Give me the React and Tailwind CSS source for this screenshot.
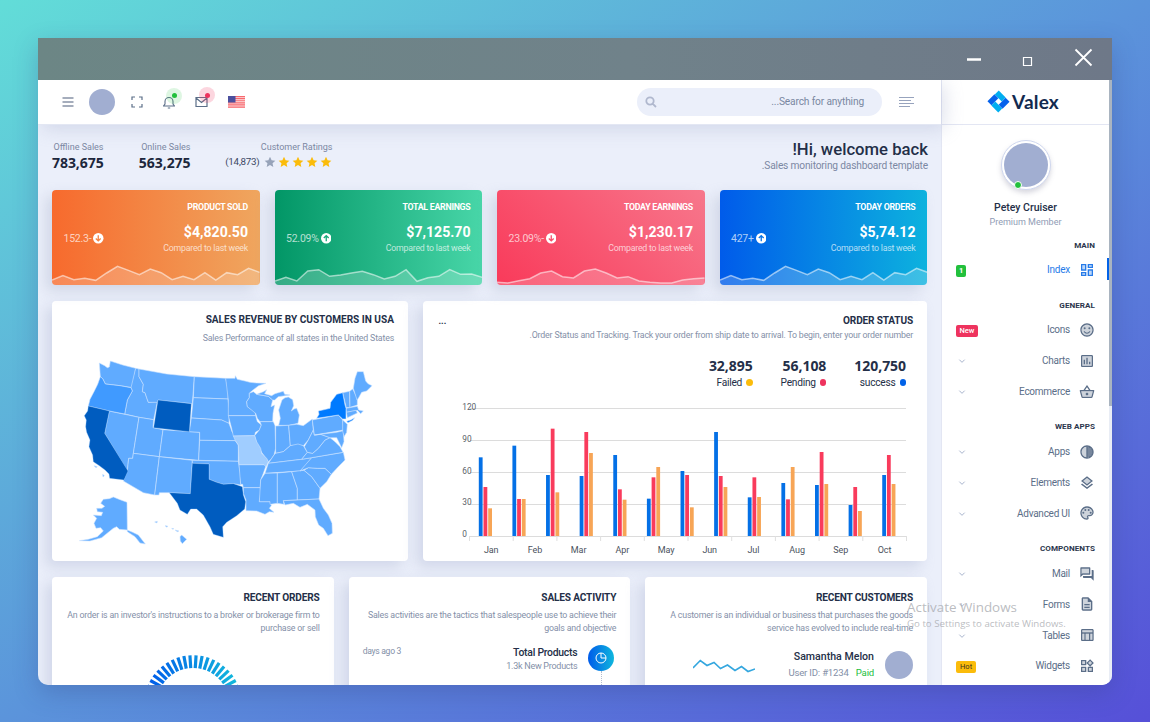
import React from "react";

const WAVE_A = [300, 287, 299, 295, 301, 279, 259, 271, 284, 267, 278, 299, 289, 299, 278, 300, 278, 284, 265, 277];
const WAVE_B = [303, 292, 303, 273, 269, 289, 285, 279, 274, 284, 297, 289, 269, 304, 293, 289, 269, 283, 282, 292];
const WAVE_C = [307, 309, 302, 296, 279, 273, 290, 294, 273, 267, 279, 294, 290, 303, 307, 309, 309, 300, 296, 294];

const STATS = [
  { title: "PRODUCT SOLD", value: "$4,820.50", delta: "152.3-", up: false, wave: WAVE_A, bg: "bg-[linear-gradient(to_right,#f76a2d,#efa65f)]", fg: "#f58345" },
  { title: "TOTAL EARNINGS", value: "$7,125.70", delta: "52.09%", up: true, wave: WAVE_B, bg: "bg-[linear-gradient(to_right,#029666,#48d6a8)]", fg: "#18a97b" },
  { title: "TODAY EARNINGS", value: "$1,230.17", delta: "23.09%-", up: false, wave: WAVE_C, bg: "bg-[linear-gradient(45deg,#f93a5a,#f7778c)]", fg: "#f94f6b" },
  { title: "TODAY ORDERS", value: "$5,74.12", delta: "427+", up: true, wave: WAVE_A, bg: "bg-[linear-gradient(to_right,#005bea,#0db2de)]", fg: "#0572e8" },
];

function StatCard({ s }) {
  const pts = s.wave.map((y, i) => `${(i * 624) / 19},${y - 255}`).join(" ");
  return (
    <div className={`relative flex h-[95px] flex-col justify-between overflow-hidden rounded-[4px] text-white shadow-[-6px_6px_14px_rgba(150,160,190,0.3)] ${s.bg}`}>
      <div className="flex flex-col px-[11.5px] pt-[10px]">
        <div className="text-right text-[8.8px] font-bold leading-[14px] tracking-[-0.27px]">{s.title}</div>
        <div className="mt-[8px] flex items-start justify-between">
          <div className="flex items-center gap-[2px] pt-[9.5px] text-[10.5px] leading-[14px] tracking-[-0.22px]">
            <span className="text-white/70">{s.delta}</span>
            <svg viewBox="0 0 12 12" className="size-[10.5px]">
              <circle cx="6" cy="6" r="6" fill="#fff" />
              <path d={s.up ? "M6 9.5V3M3.2 5.8 6 3l2.8 2.8" : "M6 2.5V9M3.2 6.2 6 9l2.8-2.8"} fill="none" stroke={s.fg} strokeWidth="1.5" />
            </svg>
          </div>
          <div className="text-right">
            <div className="text-[14.1px] font-bold leading-[20px]">{s.value}</div>
            <div className="text-[8.8px] leading-[13px] tracking-[-0.24px] text-white/70">Compared to last week</div>
          </div>
        </div>
      </div>
      <svg viewBox="0 0 624 60" preserveAspectRatio="none" className="h-5 w-full shrink-0">
        <polygon points={`0,60 ${pts} 624,60`} fill="#fff" fillOpacity=".2" />
        <polyline points={pts} fill="none" stroke="#fff" strokeOpacity=".55" strokeWidth="4.5" />
      </svg>
    </div>
  );
}

const BASE_STATES = [
  "M88,54 104,62 112,68 118,66 121,48 158,60 197,70 187,128 150,122 106,117 98,101 91,95Z",
  "M197,70 207,72 207,95 220,118 217,140 225,143 230,158 235,172 262,170 251,224 207,217 164,207 172,165 187,138 183,128Z",
  "M207,72 290,87 373,95 367,176 264,165 262,172 235,172 230,158 225,143 217,140 220,118 207,95Z",
  "M118,198 207,217 190,325 188,340 176,340 172,378 104,265Z",
  "M207,217 251,224 249,248 279,254 268,335 190,325Z",
  "M279,254 389,262 386,346 268,335Z",
  "M190,325 268,335 254,450 220,443 160,408 172,378 176,340 188,340Z",
  "M268,335 367,346 361,446 298,443 268,443 267,450 254,450Z",
  "M373,95 467,100 474,130 474,162 370,158Z",
  "M370,158 474,162 477,190 477,235 465,230 455,225 364,219Z",
  "M364,219 455,225 477,235 486,260 504,287 389,286 389,262 358,260Z",
  "M389,286 496,287 505,300 505,349 386,346Z",
  "M367,346 505,349 511,386 512,420 490,416 460,418 440,412 417,403 417,357 367,355Z",
  "M467,100 495,100 496,92 502,103 525,108 540,112 560,114 588,115 566,122 545,138 538,145 538,158 530,170 532,185 555,200 557,212 475,212 475,165Z",
  "M475,212 557,212 562,230 574,240 568,255 556,262 554,272 490,273 485,250Z",
  "M507,359 589,359 580,385 572,405 571,428 520,428 518,418 512,418Z",
  "M520,428 571,428 572,445 568,470 600,470 604,482 598,490 612,502 598,500 585,508 560,498 528,497 528,465 520,445Z",
  "M538,145 550,140 560,148 595,154 608,165 603,185 614,180 609,205 608,230 570,230 562,220 557,205 532,185 530,170 538,158Z",
  "M570,230 610,230 615,242 617,310 612,330 604,342 595,350 575,322 560,295 554,272 568,255 574,240Z",
  "M560,148 580,140 590,134 584,146 605,152 615,146 640,139 644,148 660,150 625,155 614,165 608,165 595,154Z",
  "M636,165 645,158 655,156 668,164 671,182 664,198 672,192 680,190 688,210 684,235 656,241 626,241 631,220 626,195Z",
  "M617,243 656,241 661,302 640,320 617,325Z",
  "M656,241 680,238 700,242 727,222 730,255 715,285 700,302 684,300 661,302Z",
  "M595,355 612,330 617,325 640,320 661,302 684,297 700,302 712,322 695,343Z",
  "M595,355 695,343 725,338 710,358 690,378 585,385Z",
  "M585,385 622,384 622,475 600,478 600,470 568,470 572,405Z",
  "M622,384 665,380 682,430 682,465 640,467 642,478 622,475Z",
  "M665,380 702,376 725,395 750,430 747,462 682,465 682,430Z",
  "M640,467 747,462 760,490 775,510 786,535 787,565 774,572 760,550 746,540 736,515 735,495 712,478 690,487 670,475 645,480Z",
  "M702,376 715,368 742,370 765,370 784,388 770,410 750,430 725,395Z",
  "M690,378 725,338 820,322 825,345 805,365 784,388 765,370 742,370 715,368Z",
  "M695,343 712,322 728,325 745,310 765,285 780,278 795,290 810,305 819,322 725,338Z",
  "M712,322 703,305 715,285 730,255 733,270 752,268 780,278 765,285 745,310 728,325Z",
  "M727,225 805,210 818,225 820,255 733,270Z",
  "M733,270 800,262 820,257 822,290 815,308 800,278 780,278 752,268Z",
  "M818,225 832,238 830,262 822,275 818,258Z",
  "M818,143 839,139 839,160 840,187 829,188Z",
  "M839,139 848,132 862,160 862,180 840,187Z",
  "M828,190 862,184 866,195 880,198 872,206 862,196 829,202Z",
  "M829,202 858,196 862,204 832,218Z",
  "M850,130 855,100 862,80 880,80 887,108 894,116 906,122 890,138 875,142 866,158 861,165Z",
  "M171,472 150,464 130,456 118,461 100,463 92,475 104,484 96,490 80,490 82,500 98,502 94,512 70,510 80,520 72,535 78,550 92,548 100,558 82,575 55,583 28,587 60,588 95,578 115,562 130,550 140,545 148,553 172,555 188,562 205,570 226,597 210,594 195,575 172,560Z",
  "M330,575 335,570 350,583 337,596 331,588Z",
  "M254,531 262,529 261,534Z",
  "M285,542 293,543 291,547Z",
  "M305,550 312,551 308,553Z",
  "M315,555 327,558 322,560Z",
  "M72,362 82,365 78,368Z",
  "M98,388 103,392 99,396Z",
];

function UsaMap() {
  return (
    <svg viewBox="0 0 960 630" className="h-[210px] w-[320px]" strokeLinejoin="round">
      <g fill="#60abff" stroke="#cbe2ff" strokeWidth="1.700">
        {BASE_STATES.map((d) => <path key={d} d={d} />)}
        <path d="M91,95 98,101 106,117 150,122 183,128 187,138 172,165 164,207 118,198 55,183 60,163 72,140 83,118Z" fill="#409aff" />
        <path d="M490,273 554,272 560,290 572,310 575,325 590,340 595,350 588,366 582,359 507,359 505,300 496,287Z" fill="#a0cdff" />
        <path d="M740,220 747,208 745,198 780,190 782,172 800,148 818,143 825,180 828,190 828,222 818,222 805,210Z" fill="#007aff" />
        <path d="M830,229 842,225 854,218 848,226 834,233Z" fill="#007aff" />
      </g>
      <g fill="#005cbf" stroke="#9ccaff" strokeWidth="1">
        <path d="M55,183 118,198 104,265 174,378 162,405 119,400 117,387 105,375 88,362 70,350 68,330 57,305 60,285 50,262 47,245 49,225 43,212 53,198Z" />
        <path d="M264,165 364,176 358,260 251,248Z" />
        <path d="M367,355 417,357 417,403 440,412 460,418 490,416 517,425 520,450 527,470 524,492 500,512 470,532 458,545 460,577 430,568 420,545 400,510 380,492 362,492 352,508 330,495 322,475 298,443 361,446Z" />
      </g>
    </svg>
  );
}

const SERIES = [
  { color: "#0470e6", tops: [472, 437, 525, 528, 465, 596, 513, 396, 592, 549, 555, 615, 525] },
  { color: "#f93b5c", tops: [561, 597, 386, 396, 568, 532, 525, 528, 532, 598, 456, 561, 465] },
  { color: "#f7a556", tops: [625, 597, 577, 459, 599, 501, 622, 561, 591, 501, 552, 633, 552] },
];
const MONTHS = ["Jan", "Feb", "Mar", "Apr", "May", "Jun", "Jul", "Aug", "Sep", "Oct"];

function OrderChart() {
  return (
    <svg viewBox="425 398 500 162" className="h-[162px] w-[500px] font-[Roboto,sans-serif]">
      {[120, 90, 60, 30, 0].map((v, i) => (
        <g key={v}>
          <rect x={v ? 470 : 469} y={408 + i * 32} width={v ? 436 : 437} height="1" fill="#dcdcdc" />
          <text x="462.300" y={409.9 + i * 31.8} fontSize="8.300" fill="#5a5f68">{v}</text>
        </g>
      ))}
      {Array.from({ length: 11 }, (_, i) => (
        <rect key={i} x={469 + i * 43.7} y="536" width="1" height="5" fill="#dfdfdf" />
      ))}
      {SERIES.map((s, k) =>
        s.tops.map((t, i) => (
          <rect key={`${k}-${i}`} x={478.8 + i * 33.62 + k * 4.7} y={300 + t / 3} width="3.800" height={236 - t / 3} fill={s.color} />
        ))
      )}
      {MONTHS.map((m, i) => (
        <text key={m} x={491.2 + i * 43.7} y="553.300" textAnchor="middle" fontSize="9" letterSpacing="-0.100" fill="#4c535e">{m}</text>
      ))}
    </svg>
  );
}

const ICONS = {
  index: ["M5 5h4v6H5zm10 8h4v6h-4zM5 17h4v2H5zM15 5h4v2h-4z", "M3 13h8V3H3v10zm2-8h4v6H5V5zm8 16h8V11h-8v10zm2-8h4v6h-4v-6zM13 3v6h8V3h-8zm6 4h-4V5h4v2zM3 21h8v-6H3v6zm2-4h4v2H5v-2z"],
  smile: ["M12 4a8 8 0 100 16 8 8 0 000-16z", "M12 2C6.47 2 2 6.48 2 12s4.47 10 10 10 10-4.48 10-10S17.52 2 12 2zm0 18c-4.42 0-8-3.58-8-8s3.58-8 8-8 8 3.58 8 8-3.58 8-8 8zM15.500 8a1.500 1.500 0 100 3 1.500 1.500 0 000-3zM8.500 8a1.500 1.500 0 100 3 1.500 1.500 0 000-3zM12 16c-1.480 0-2.750-.81-3.450-2H6.880c.8 2.050 2.790 3.500 5.120 3.500s4.320-1.450 5.120-3.500h-1.670c-.69 1.190-1.970 2-3.450 2z"],
  chart: ["M5 5h14v14H5z", "M19 3H5c-1.100 0-2 .9-2 2v14c0 1.100.9 2 2 2h14c1.100 0 2-.9 2-2V5c0-1.100-.9-2-2-2zm0 16H5V5h14v14zM7 10h2v7H7zm4-3h2v10h-2zm4 6h2v4h-2z"],
  basket: ["M3.310 11l2.200 8.010L18.500 19l2.200-8H3.310z", "M22 9h-4.790l-4.380-6.560c-.19-.28-.51-.42-.83-.42s-.64.14-.83.43L6.790 9H2c-.55 0-1 .45-1 1 0 .09.01.18.04.27l2.540 9.270c.23.84 1 1.460 1.920 1.460h13c.92 0 1.690-.62 1.930-1.460l2.540-9.270L23 10c0-.55-.45-1-1-1zM12 4.800L14.800 9H9.200L12 4.800zM18.500 19l-12.990.01L3.310 11H20.700l-2.200 8zM12 13c-1.100 0-2 .9-2 2s.9 2 2 2 2-.9 2-2-.9-2-2-2z"],
  tone: ["M12 4a8 8 0 100 16z M13 4v16a8 8 0 000-16z", "M12 2C6.480 2 2 6.480 2 12s4.480 10 10 10 10-4.480 10-10S17.520 2 12 2zm-1 17.930c-3.940-.49-7-3.850-7-7.930s3.050-7.440 7-7.930v15.860zm2-15.860c1.030.13 2 .45 2.870.93H13v-.93zM13 7h5.240c.25.31.48.65.68 1H13V7zm0 3h6.740c.08.33.15.66.19 1H13v-1zm0 9.930V19h2.870c-.87.48-1.840.8-2.870.93zM18.240 17H13v-1h5.920c-.2.35-.43.69-.68 1zm1.500-3H13v-1h6.930c-.04.34-.11.67-.19 1z"],
  layers: ["M6.260 9L12 13.470 17.740 9 12 4.530z", "M12 18.540l-7.370-5.730L3 14.070l9 7 9-7-1.630-1.270zM12 16l7.360-5.730L21 9l-9-7-9 7 1.630 1.270L12 16zm0-11.470L17.740 9 12 13.470 6.260 9 12 4.530z"],
  palette: ["M12 4c-4.410 0-8 3.590-8 8s3.590 8 8 8c.28 0 .5-.22.5-.5 0-.16-.08-.28-.14-.35-.41-.46-.63-1.050-.63-1.650 0-1.380 1.120-2.500 2.500-2.500H16c2.210 0 4-1.790 4-4 0-3.860-3.590-7-8-7z", "M12 22C6.490 22 2 17.510 2 12S6.490 2 12 2s10 4.040 10 9c0 3.310-2.690 6-6 6h-1.770c-.28 0-.5.22-.5.5 0 .12.05.23.13.33.41.47.64 1.060.64 1.670 0 1.380-1.120 2.500-2.500 2.500zm0-18c-4.410 0-8 3.590-8 8s3.590 8 8 8c.28 0 .5-.22.5-.5 0-.16-.08-.28-.14-.35-.41-.46-.63-1.050-.63-1.650 0-1.380 1.120-2.500 2.500-2.500H16c2.210 0 4-1.790 4-4 0-3.860-3.590-7-8-7zM6.500 10a1.500 1.500 0 100 3 1.500 1.500 0 000-3zM9.500 6a1.500 1.500 0 100 3 1.500 1.500 0 000-3zM14.500 6a1.500 1.500 0 100 3 1.500 1.500 0 000-3zM17.500 10a1.500 1.500 0 100 3 1.500 1.500 0 000-3z"],
  forum: ["M15 11V4H4v8.170L5.170 11H15z", "M15 4v7H5.170L4 12.170V4h11m1-2H3c-.55 0-1 .45-1 1v14l4-4h10c.55 0 1-.45 1-1V3c0-.55-.45-1-1-1zm5 4h-2v9H6v2c0 .55.45 1 1 1h11l4 4V7c0-.55-.45-1-1-1z"],
  doc: ["M13 4H6v16h12V9h-5V4z", "M8 16h8v2H8zm0-4h8v2H8zm6-10H6c-1.100 0-2 .9-2 2v16c0 1.100.89 2 1.990 2H18c1.100 0 2-.9 2-2V8l-6-6zm4 18H6V4h7v5h5v11z"],
  table: ["M5 5h15v3H5zM17 10h3v9h-3zM5 10h3v9H5zM10 10h5v9h-5z", "M20 3H5c-1.100 0-2 .9-2 2v14c0 1.100.9 2 2 2h15c1.100 0 2-.9 2-2V5c0-1.100-.9-2-2-2zm0 2v3H5V5h15zm-5 14h-5v-9h5v9zM5 10h3v9H5v-9zm12 9v-9h3v9h-3z"],
  widgets: ["M5 5h4v4H5zm10 10h4v4h-4zM5 15h4v4H5zM16.660 4.520l-2.830 2.820 2.830 2.830 2.830-2.830z", "M16.660 4.520l2.830 2.830-2.830 2.830-2.830-2.830 2.830-2.830M9 5v4H5V5h4m10 10v4h-4v-4h4M9 15v4H5v-4h4m7.660-13.310L11 7.340 16.660 13l5.660-5.660-5.660-5.650zM11 3H3v8h8V3zm10 10h-8v8h8v-8zm-10 0H3v8h8v-8z"],
};

function TwoTone({ name }) {
  const [soft, line] = ICONS[name];
  return (
    <svg viewBox="0 0 24 24" fill="currentColor" className="size-4 shrink-0">
      <path d={soft} opacity=".3" />
      <path d={line} />
    </svg>
  );
}

const MENU = [
  { head: "MAIN", items: [{ label: "Index", icon: "index", badge: "1", badgeCls: "bg-[#22c03c] text-white px-[3px] font-bold", active: true }] },
  { head: "GENERAL", items: [{ label: "Icons", icon: "smile", badge: "New", badgeCls: "bg-[#ee335e] text-white px-[3.5px] font-medium" }, { label: "Charts", icon: "chart" }, { label: "Ecommerce", icon: "basket" }] },
  { head: "WEB APPS", items: [{ label: "Apps", icon: "tone" }, { label: "Elements", icon: "layers" }, { label: "Advanced UI", icon: "palette" }] },
  { head: "COMPONENTS", items: [{ label: "Mail", icon: "forum" }, { label: "Forms", icon: "doc" }, { label: "Tables", icon: "table" }, { label: "Widgets", icon: "widgets", badge: "Hot", badgeCls: "bg-[#fbbc0b] text-[#3b3420] px-[4px]" }] },
];

function Sidebar() {
  return (
    <aside className="flex w-[168px] shrink-0 flex-col border-l border-[#e3e6f3] bg-white">
      <div className="flex h-[45px] shrink-0 items-center justify-center gap-[2px] border-b border-[#e3e6f3] pb-[1px] pr-[5px]">
        <svg viewBox="0 0 66 66" className="size-[23px]" strokeWidth="16" strokeLinejoin="round">
          <path d="M28 7 48 27" stroke="#00aef0" />
          <path d="M38 59 18 39" stroke="#00aef0" />
          <path d="M59 28 39 48" stroke="#0562ec" />
          <path d="M7 38 27 18" stroke="#0562ec" />
        </svg>
        <span className="font-['Lato',sans-serif] text-[19px] font-bold leading-none tracking-[0.15px] text-[#122a4f]">Valex</span>
      </div>
      <div className="flex h-[100px] shrink-0 flex-col items-center pt-[15px]">
        <div className="relative flex size-[50px] shrink-0 items-center justify-center rounded-full border border-[#cfd7ee] bg-white shadow-[0_3px_5px_rgba(100,100,130,0.25)]">
          <div className="size-[44px] rounded-full bg-[#a1aed1]" />
          <span className="absolute bottom-[0px] left-[12.5px] size-[8px] rounded-full border border-white bg-[#22c03c]" />
        </div>
        <div className="mt-[9.500px] text-[10.500px] font-medium leading-[16px] text-[#242f48]">Petey Cruiser</div>
        <div className="text-[9px] leading-[13px] text-[#8f9cb5]">Premium Member</div>
      </div>
      {MENU.map((g) => (
        <div key={g.head} className="flex flex-col">
          <div className="h-[29.400px] pr-[14px] pt-[12.500px] text-right text-[8.100px] font-bold leading-[14px] tracking-[0.050px] text-[#2c364c]">{g.head}</div>
          {g.items.map((it) => (
            <div key={it.label} className={`relative flex h-[30.800px] items-center justify-end gap-[9px] pr-[14px] text-[10px] tracking-[-0.250px] ${it.active ? "text-[#267be9]" : "text-[#5b6e88]"}`}>
              <div className="flex flex-1 items-center pl-[14px] pt-[3px] tracking-normal">
                {it.badge ? (
                  <span className={`rounded-[2px] text-[7.500px] leading-[12px] ${it.badgeCls}`}>{it.badge}</span>
                ) : (
                  <svg viewBox="0 0 12 12" className="mb-[2px] ml-[2px] size-[8px]"><path d="M2 4l4 4 4-4" fill="none" stroke="#a8b4cd" strokeWidth="1.500" /></svg>
                )}
              </div>
              <span>{it.label}</span>
              <TwoTone name={it.icon} />
              {it.active && <span className="absolute right-0 top-[4px] h-[22px] w-[2px] bg-[#0162e8]" />}
            </div>
          ))}
        </div>
      ))}
    </aside>
  );
}

function Header() {
  return (
    <header className="relative z-10 flex h-[45px] shrink-0 items-center justify-between border-b border-[#e3e7f3] bg-white pl-[23.500px] pr-[27px] text-[#5b6e88] shadow-[4px_4px_18px_rgba(150,160,195,0.3)]">
      <div className="flex items-center">
        <svg viewBox="0 0 12 12" className="size-3"><path d="M.5 2h11M.5 6h11M.5 10h11" stroke="#4d5d7a" strokeWidth="1.200" /></svg>
        <div className="ml-[15.500px] size-[26px] rounded-full bg-[#a1aed1]" />
        <svg viewBox="0 0 12 12" className="ml-[15.500px] size-3"><path d="M4 1H1v3M8 1h3v3M4 11H1V8M8 11h3V8" fill="none" stroke="currentColor" strokeWidth="1.200" /></svg>
        <div className="relative ml-5 flex">
          <svg viewBox="0 0 12 13" className="h-[13px] w-3"><path d="M.5 10h11L10 8V5.500a4 4 0 00-8 0V8zM4.800 12h2.400" fill="none" stroke="currentColor" strokeWidth="1.100" /></svg>
          <span className="absolute left-[3.500px] top-[-8px] flex size-4 items-center justify-center rounded-full bg-[#22c03c]/15"><i className="size-[5px] rounded-full bg-[#22c03c]" /></span>
        </div>
        <div className="relative ml-[20px] flex">
          <svg viewBox="0 0 13 12" className="h-3 w-[13px]"><path d="M1 1.500h11v9H1zM1 2l5.500 4.500L12 2" fill="none" stroke="currentColor" strokeWidth="1.200" /></svg>
          <span className="absolute left-[4.500px] top-[-9px] flex size-4 items-center justify-center rounded-full bg-[#ee335e]/20"><i className="size-[5px] rounded-full bg-[#ee335e]" /></span>
        </div>
        <svg viewBox="0 0 17 12" className="ml-5 h-3 w-[17px]">
          <rect width="17" height="12" fill="#fde3e4" />
          <path d="M0 .5h17M0 2.400h17M0 4.300h17M0 6.200h17M0 8.100h17M0 10h17M0 11.700h17" stroke="#f8696e" strokeWidth="1.100" />
          <rect width="7.500" height="6.500" fill="#4b4f9e" />
        </svg>
      </div>
      <div className="flex items-center gap-[17px]">
        <div className="flex h-7 w-[245px] items-center justify-between rounded-full bg-[#ebeffa] pl-[8px] pr-[18px]">
          <svg viewBox="0 0 12 12" className="size-3"><path d="M7.800 7.800 11 11M5 8.700a3.700 3.700 0 110-7.400 3.700 3.700 0 010 7.400z" fill="none" stroke="#b0b8ce" strokeWidth="1.800" /></svg>
          <span className="text-[10.200px] tracking-[-0.150px] text-[#7987a1]">...Search for anything</span>
        </div>
        <svg viewBox="0 0 15 12" className="h-3 w-[15px]"><path d="M0 1.500h15M0 4.500h12M0 7.500h15M0 10.500h11" stroke="#97a3bd" strokeWidth="1.200" /></svg>
      </div>
    </header>
  );
}

const STAR = "M12 1.500l3.200 6.900 7.500.9-5.600 5.100 1.500 7.400L12 18.100l-6.600 3.700 1.500-7.400L1.300 9.300l7.500-.9z";

function Welcome() {
  return (
    <div className="flex h-[65px] items-start justify-between pr-[13px] pt-[14px]">
      <div className="flex text-right">
        <div className="w-[51.500px]">
          <div className="text-[9px] leading-[17px] text-[#7b88a3]">Offline Sales</div>
          <div className="font-['Open_Sans',sans-serif] text-[14px] font-bold leading-[13px] tracking-[-0.050px] text-[#1c273c]">783,675</div>
        </div>
        <div className="w-[87px]">
          <div className="text-[9px] leading-[17px] text-[#7b88a3]">Online Sales</div>
          <div className="font-['Open_Sans',sans-serif] text-[14px] font-bold leading-[13px] tracking-[-0.050px] text-[#1c273c]">563,275</div>
        </div>
        <div className="w-[142px]">
          <div className="text-[9px] leading-[17px] text-[#7b88a3]">Customer Ratings</div>
          <div className="flex items-center justify-end gap-[2px] pr-[0.500px]">
            <span className="mr-[2.500px] text-[9.800px] leading-[12px] tracking-[-0.250px] text-[#3b4863]">(14,873)</span>
            {["#97a3b9", "#fbbc0b", "#fbbc0b", "#fbbc0b", "#fbbc0b"].map((c, i) => (
              <svg key={i} viewBox="0 0 24 24" className="size-[12px]"><path d={STAR} fill={c} /></svg>
            ))}
          </div>
        </div>
      </div>
      <div className="text-right">
        <div className="text-[16.700px] font-medium leading-[21px] text-[#242f48]">!Hi, welcome back</div>
        <div className="text-[10.200px] leading-[12px] tracking-[-0.180px] text-[#7b88a3]">.Sales monitoring dashboard template</div>
      </div>
    </div>
  );
}

const PANEL = "rounded-[4px] bg-white shadow-[-6px_6px_14px_rgba(150,160,195,0.3)]";

function Panel({ title, sub, className = "", heading = "pt-[13.500px] text-[10.100px] tracking-[-0.160px]", children }) {
  return (
    <section className={`flex flex-col ${PANEL} ${className}`}>
      <h3 className={`px-[14px] text-right font-bold leading-[14px] text-[#242f48] ${heading}`}>{title}</h3>
      <p className="mt-[4.500px] whitespace-pre px-[14px] text-right text-[8.800px] leading-[12.500px] tracking-[-0.180px] text-[#8490a8]">{sub}</p>
      {children}
    </section>
  );
}

const TOTALS = [
  { value: "32,895", label: "Failed", dot: "bg-[#fbbc0b]" },
  { value: "56,108", label: "Pending", dot: "bg-[#ee335e]" },
  { value: "120,750", label: "success", dot: "bg-[#0162e8]" },
];

function Donut() {
  return (
    <svg viewBox="0 0 100 100" className="mx-auto mt-[20px] size-[100px] shrink-0">
      <defs>
        <linearGradient id="ring" gradientUnits="userSpaceOnUse" x1="5" y1="0" x2="95" y2="0">
          <stop offset="0" stopColor="#005bea" /><stop offset="1" stopColor="#13bbdc" />
        </linearGradient>
      </defs>
      <g stroke="url(#ring)" strokeWidth="3.200">
        {Array.from({ length: 50 }, (_, i) => {
          const a = ((i + 0.5) * 7.2 * Math.PI) / 180;
          const c = Math.cos(a);
          const s = Math.sin(a);
          return <path key={i} d={`M${50 + 36 * s} ${50 - 36 * c}L${50 + 48.8 * s} ${50 - 48.8 * c}`} />;
        })}
      </g>
    </svg>
  );
}

export default function App() {
  return (
    <div className="relative h-[722px] w-[1150px] overflow-hidden bg-[linear-gradient(to_bottom_right,#62ddd8,#5b94db_50%,#5650d8)] font-['Roboto',sans-serif]">
      <div className="px-[38px] pt-[38px]">
        <div className="rounded-b-[10px] shadow-[0_8px_24px_rgba(50,60,130,0.28)]">
          <div className="flex h-[42px] w-[1074px] items-center justify-end bg-[linear-gradient(to_right,#6c8685,#70828a_55%,#6e7888)]">
            <svg viewBox="0 0 130 42" className="mr-[18px] h-[42px] w-[130px]" fill="none" stroke="#fff">
              <path d="M3 21.500h14" strokeWidth="2.500" />
              <path d="M59.500 19.500h8v8h-8z" strokeWidth="1.200" />
              <path d="M111.500 11.500l16 16M127.500 11.500l-16 16" strokeWidth="1.800" />
            </svg>
          </div>
          <div className="flex h-[605px] w-[1074px] overflow-hidden rounded-b-[10px] bg-[#ebeffa]">
            <div className="flex w-[903px] shrink-0 flex-col">
              <Header />
              <main className="flex flex-col pl-[14px]">
                <Welcome />
                <div className="grid w-[875px] grid-cols-4 gap-[15px]">
                  {STATS.map((s) => <StatCard key={s.title} s={s} />)}
                </div>
                <div className="mt-4 flex gap-[15px]">
                  <Panel title="SALES REVENUE BY CUSTOMERS IN USA" sub="Sales Performance of all states in the United States" heading="pt-[12px] text-[10.080px]" className="h-[260px] w-[356px]">
                    <div className="ml-[18px] mt-[1px] flex"><UsaMap /></div>
                  </Panel>
                  <section className={`flex h-[260px] w-[504px] flex-col ${PANEL}`}>
                    <div className="flex items-center justify-between pl-[15.500px] pr-[14px] pt-[13px] leading-[14px] text-[#242f48]">
                      <span className="text-[9px] font-bold">...</span>
                      <h3 className="text-[10.100px] font-bold tracking-[-0.160px]">ORDER STATUS</h3>
                    </div>
                    <p className="whitespace-nowrap px-[14px] text-right text-[8.800px] leading-[15px] tracking-[-0.180px] text-[#8490a8]">.Order Status and Tracking. Track your order from ship date to arrival. To begin, enter your order number</p>
                    <div className="mt-[14px] flex justify-end gap-[28px] pr-[21px] text-right">
                      {TOTALS.map((t) => (
                        <div key={t.label}>
                          <div className="font-['Open_Sans',sans-serif] text-[14px] font-bold leading-[17px] tracking-[-0.050px] text-[#242f48]">{t.value}</div>
                          <div className="flex items-center justify-end gap-1 text-[10.200px] leading-[17px] tracking-[-0.250px] text-[#242f48]">{t.label}<i className={`size-[6.500px] rounded-full ${t.dot}`} /></div>
                        </div>
                      ))}
                    </div>
                    <div className="ml-[2px] mt-[7px] flex"><OrderChart /></div>
                  </section>
                </div>
                <div className="mt-4 grid h-[140px] w-[875px] grid-cols-3 gap-[15px]">
                  <Panel title="RECENT ORDERS" sub={"An order is an investor's instructions to a broker or brokerage firm to\npurchase or sell"}>
                    <Donut />
                  </Panel>
                  <Panel title="SALES ACTIVITY" sub={"Sales activities are the tactics that salespeople use to achieve their\ngoals and objective"}>
                    <div className="mt-[11px] flex items-start justify-between pl-[14px] pr-4">
                      <span className="text-[8.600px] leading-[13px] tracking-[-0.300px] text-[#8490a8]">days ago 3</span>
                      <div className="flex gap-[11px] text-right">
                        <div>
                          <div className="text-[10.400px] font-medium leading-[15px] tracking-[-0.250px] text-[#242f48]">Total Products</div>
                          <div className="text-[9px] leading-[12px] tracking-[-0.270px] text-[#8490a8]">1.3k New Products</div>
                        </div>
                        <div className="flex flex-col items-center">
                          <div className="flex size-[26px] items-center justify-center rounded-full bg-[linear-gradient(to_right,#005bea,#0fb7dd)]">
                            <svg viewBox="0 0 12 12" className="size-3" fill="none" stroke="#fff" strokeWidth="1"><circle cx="6" cy="6" r="5" /><path d="M6 1v5h5" /></svg>
                          </div>
                          <div className="h-10 border-l border-dotted border-[#b4bdd0]" />
                        </div>
                      </div>
                    </div>
                  </Panel>
                  <Panel title="RECENT CUSTOMERS" sub={"A customer is an individual or business that purchases the goods\nservice has evolved to include real-time"}>
                    <div className="mt-[15px] flex items-center justify-end pr-[14px]">
                      <svg viewBox="0 0 62 14" className="mr-[33px] mt-[2px] h-[14px] w-[62px]"><path d="M0 9 7.300 1.500 14 6.500 21 3.500 27.500 9.500 34.500 6 42 11.500 48.500 7.500 55 12.500 62 10" fill="none" stroke="#35a7df" strokeWidth="1.600" /></svg>
                      <div className="text-right leading-[15.500px]">
                        <div className="text-[10.600px] font-medium text-[#242f48]">Samantha Melon</div>
                        <div className="text-[9.600px] tracking-[-0.200px] text-[#8490a8]">User ID: #1234 <span className="ml-[5px] text-[#22c03c]">Paid</span></div>
                      </div>
                      <div className="ml-[11px] size-7 rounded-full bg-[#a1aed1]" />
                    </div>
                  </Panel>
                </div>
              </main>
            </div>
            <Sidebar />
            <div className="flex flex-1 flex-col bg-[#e9edf5]"><div className="h-[326px] bg-[#a9b4c0]" /></div>
          </div>
        </div>
      </div>
      <div className="absolute left-[907px] top-[598px] whitespace-nowrap font-['Open_Sans',sans-serif] text-[#a9abb0]/80">
        <div className="text-[13.400px] leading-[18px]">Activate Windows</div>
        <div className="text-[9.700px] leading-[15px]">Go to Settings to activate Windows.</div>
      </div>
    </div>
  );
}
